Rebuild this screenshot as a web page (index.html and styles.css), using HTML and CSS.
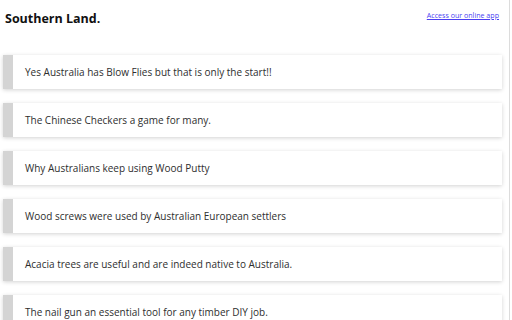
FILE: index.html
```html
<!DOCTYPE html>
<html>
<head>
<meta charset="utf-8">
<link rel="stylesheet" href="styles.css">
</head>
<body>
<div class="page">
  <header class="top">
    <h1 class="brand">Southern Land.</h1>
    <a class="app-link" href="#">Access our online app</a>
  </header>
  <ul class="list">
    <li class="card">Yes Australia has Blow Flies but that is only the start!!</li>
    <li class="card">The Chinese Checkers a game for many.</li>
    <li class="card">Why Australians keep using Wood Putty</li>
    <li class="card">Wood screws were used by Australian European settlers</li>
    <li class="card">Acacia trees are useful and are indeed native to Australia.</li>
    <li class="card">The nail gun an essential tool for any timber DIY job.</li>
  </ul>
</div>
</body>
</html>
```
FILE: styles.css
```css
html, body {
  margin: 0;
  padding: 0;
  background: #fff;
  overflow: hidden;
}
.page {
  width: 509px;
  height: 320px;
  border-right: 1px solid #dcdcdc;
  font-family: "Open Sans", "Noto Sans", sans-serif;
  color: #333;
}
.top {
  display: flex;
  justify-content: space-between;
  align-items: flex-start;
  height: 55px;
}
.brand {
  margin: 11px 0 0 5px;
  font-size: 12.5px;
  font-weight: bold;
  color: #111;
  line-height: 16px;
}
.app-link {
  margin: 10px 10px 0 0;
  font-size: 7.1px;
  line-height: 10px;
  color: #4b3ff2;
  text-decoration: underline;
}
.list {
  list-style: none;
  margin: 0 0 0 3px;
  padding: 0;
  width: 499px;
  display: flex;
  flex-direction: column;
  gap: 14px;
}
.card {
  height: 34px;
  box-sizing: border-box;
  display: flex;
  align-items: center;
  padding-left: 12px;
  border-left: 10px solid #d4d4d4;
  background: #fff;
  box-shadow: 0 1px 4px rgba(0,0,0,0.18);
  font-size: 10px;
  color: #2e2e2e;
}
```
